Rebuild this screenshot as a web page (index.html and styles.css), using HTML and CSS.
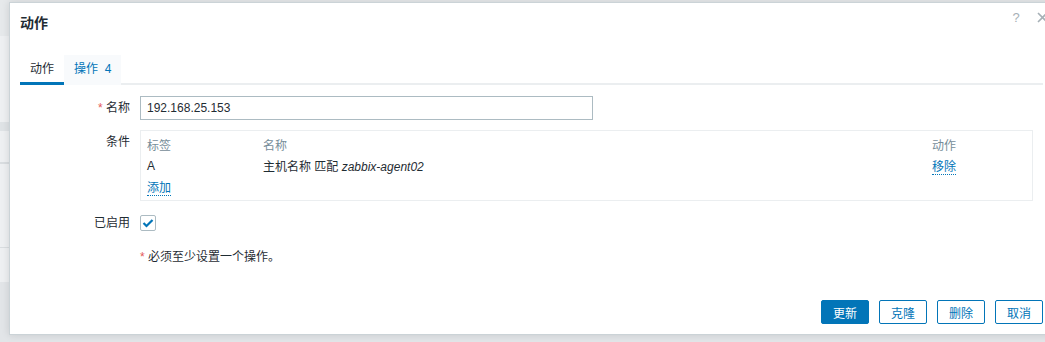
FILE: index.html
```html
<!DOCTYPE html>
<html lang="zh-CN">
<head>
    <meta charset="UTF-8">
    <title>动作</title>
    <link rel="stylesheet" href="styles.css">
</head>
<body>
    <div class="dialog">
        <div class="dialog-header">
            <h4>动作</h4>
            <div class="header-buttons">
                <span class="btn-help">?</span>
                <span class="btn-close">
                    <svg width="11" height="11" viewBox="0 0 11 11"><path d="M1 1 L10 10 M10 1 L1 10" stroke="#a6b0b6" stroke-width="1.6" fill="none"/></svg>
                </span>
            </div>
        </div>

        <div class="dialog-body">
            <ul class="tabs">
                <li class="tab active">动作</li>
                <li class="tab">操作&nbsp; 4</li>
            </ul>

            <form class="form-grid">
                <label class="form-label"><span class="required">*</span> 名称</label>
                <div class="form-field">
                    <input type="text" class="text-input" value="192.168.25.153">
                </div>

                <label class="form-label">条件</label>
                <div class="form-field">
                    <div class="conditions">
                        <span class="th">标签</span>
                        <span class="th">名称</span>
                        <span class="th">动作</span>

                        <span>A</span>
                        <span>主机名称 匹配 <em>zabbix-agent02</em></span>
                        <span><a class="link">移除</a></span>

                        <span><a class="link">添加</a></span>
                    </div>
                </div>

                <label class="form-label">已启用</label>
                <div class="form-field">
                    <span class="checkbox">
                        <svg width="12" height="10" viewBox="0 0 12 10"><path d="M1.5 5 L4.5 8 L10.5 2" stroke="#0275b8" stroke-width="2.2" fill="none"/></svg>
                    </span>
                </div>

                <span></span>
                <div class="form-field note"><span class="required">*</span> 必须至少设置一个操作。</div>
            </form>
        </div>

        <div class="dialog-footer">
            <button class="btn primary">更新</button>
            <button class="btn">克隆</button>
            <button class="btn">删除</button>
            <button class="btn">取消</button>
        </div>
    </div>
</body>
</html>
```

FILE: styles.css
```css
html, body {
    overflow: hidden;
}
body {
    margin: 0;
    padding: 2px 0 0 9px;
    height: 342px;
    box-sizing: border-box;
    font-family: "Liberation Sans", Arial, "Noto Sans CJK SC", sans-serif;
    font-size: 12px;
    color: #1f2c33;
    background: linear-gradient(to bottom,
        #e6e9eb 0 36px,
        #eef0f2 36px 122px,
        #dfe3e6 122px 131px,
        #eef0f2 131px 162px,
        #d9dde0 162px 164px,
        #eef0f2 164px 247px,
        #d9dde0 247px 248px,
        #eef0f2 248px 282px,
        #e2e5e8 282px);
}
.dialog {
    width: 1043px;
    background: #fff;
    border: 1px solid #cbd3d7;
    box-shadow: 0 0 8px rgba(0, 0, 0, 0.12);
}
.dialog-header {
    display: flex;
    justify-content: space-between;
    align-items: flex-start;
    height: 40px;
    padding-left: 10px;
}
.dialog-header h4 {
    margin: 0;
    font-size: 14px;
    font-weight: bold;
    line-height: 40px;
}
.header-buttons {
    display: flex;
    gap: 4px;
    padding-top: 3px;
}
.btn-help, .btn-close {
    width: 22px;
    height: 22px;
    display: flex;
    align-items: center;
    justify-content: center;
    color: #a6b0b6;
    font-size: 13px;
}
.dialog-body {
    padding: 12px 10px 0;
}
.tabs {
    list-style: none;
    margin: 0;
    padding: 0;
    display: flex;
    border-bottom: 2px solid #ebeef0;
}
.tab {
    padding: 2px 10px 0;
    line-height: 25px;
    border-bottom: 3px solid transparent;
    margin-bottom: -2px;
    color: #0275b8;
    background: #f8fafc;
}
.tab.active {
    color: #1f2c33;
    background: #fff;
    border-bottom-color: #0275b8;
}
.form-grid {
    display: grid;
    grid-template-columns: 110px 1fr;
    column-gap: 10px;
    row-gap: 10px;
    margin-top: 11px;
}
.form-label {
    text-align: right;
    line-height: 24px;
}
.required {
    color: #e45959;
}
.text-input {
    box-sizing: border-box;
    width: 453px;
    height: 24px;
    margin: 0;
    padding: 0 6px;
    border: 1px solid #acbbc2;
    font-family: inherit;
    font-size: 12px;
    color: #1f2c33;
    outline: none;
}
.conditions {
    width: 893px;
    box-sizing: border-box;
    border: 1px solid #ebeef0;
    padding: 3px 6px 3px;
    display: grid;
    grid-template-columns: 116px 1fr 94px;
    grid-auto-rows: 21px;
    align-items: center;
}
.th {
    color: #768d99;
}
.link {
    color: #0275b8;
    border-bottom: 1px dotted #0275b8;
    cursor: pointer;
}
.checkbox {
    margin-top: 4px;
    width: 14px;
    height: 14px;
    border: 1px solid #acbbc2;
    border-radius: 2px;
    display: flex;
    align-items: center;
    justify-content: center;
}
.note {
    line-height: 24px;
}
.dialog-footer {
    display: flex;
    justify-content: flex-end;
    gap: 10px;
    margin-top: 31px;
    padding: 0 10px 10px;
}
.btn {
    width: 48px;
    height: 24px;
    padding: 0;
    border: 1px solid #0275b8;
    border-radius: 2px;
    background: #fff;
    color: #0275b8;
    font-family: inherit;
    font-size: 12px;
}
.btn.primary {
    background: #0275b8;
    color: #fff;
}
```
